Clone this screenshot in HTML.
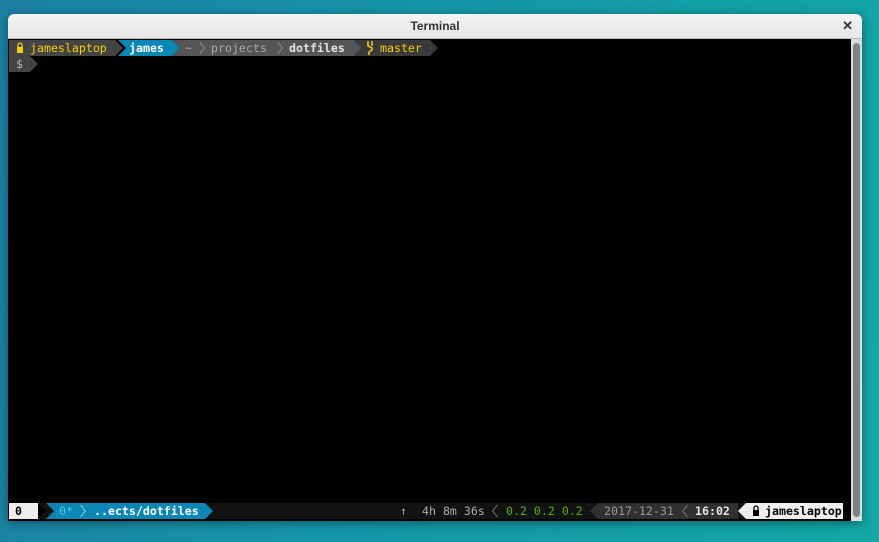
<!DOCTYPE html>
<html><head><style>
*{margin:0;padding:0;box-sizing:border-box}
body{width:879px;height:542px;overflow:hidden;background:linear-gradient(100deg,#1b7fa3 0%,#1594a8 40%,#12a7a5 100%);font-family:"DejaVu Sans Mono","Liberation Mono",monospace;font-size:11.6px;position:relative}
.win{position:absolute;left:8px;top:14px;width:854px;height:507px;background:#000;border-radius:6px 6px 0 0;box-shadow:0 2px 10px rgba(0,0,0,.4);overflow:hidden}
.tb{position:absolute;left:0;top:0;width:854px;height:25px;background:linear-gradient(#f4f4f4,#e6e6e6);border-bottom:1px solid #bbb;font-family:"Liberation Sans",sans-serif;font-size:12px;font-weight:bold;color:#333;text-align:center;line-height:24px}
.x{position:absolute;right:9px;top:0;font-size:13px;color:#333}
.sb{position:absolute;left:843px;top:25px;width:11px;height:482px;background:#dcdcdc}
.th{position:absolute;left:2px;top:4px;width:7px;height:474px;background:#7f8384;border-radius:4px}
.s{position:absolute;height:16px;line-height:16px;white-space:pre}
.ar{position:absolute;height:16px}
.sep{position:absolute;width:6px;height:12px}
</style></head><body>
<div class="win">
<div class="tb">Terminal<span class="x">✕</span></div>
<div class="sb"><div class="th"></div></div>
</div>
<!-- top row y40 -->
<div class="s" style="left:9px;top:40px;width:106px;background:#444"></div>
<div class="ar" style="left:115px;top:40px;width:8px;background:#444;clip-path:polygon(0 0,100% 50%,0 100%)"></div>
<div class="s" style="left:118px;top:40px;width:54px;background:#0a87b4;clip-path:polygon(0 0,100% 0,100% 100%,0 100%,8px 50%)"></div>
<div class="ar" style="left:172px;top:40px;width:8px;background:#0a87b4;clip-path:polygon(0 0,100% 50%,0 100%)"></div>
<div class="s" style="left:172px;top:40px;width:182px;background:#555;clip-path:polygon(0 0,100% 0,100% 100%,0 100%,8px 50%)"></div>
<div class="ar" style="left:354px;top:40px;width:8px;background:#555;clip-path:polygon(0 0,100% 50%,0 100%)"></div>
<div class="s" style="left:354px;top:40px;width:76px;background:#3a3a3a;clip-path:polygon(0 0,100% 0,100% 100%,0 100%,8px 50%)"></div>
<div class="ar" style="left:430px;top:40px;width:8px;background:#3a3a3a;clip-path:polygon(0 0,100% 50%,0 100%)"></div>
<svg style="position:absolute;left:16px;top:42px" width="8" height="11"><path d="M2 5V3a2 2 0 0 1 4 0v2" stroke="#f5d000" stroke-width="1.3" fill="none"/><rect x="1" y="5" width="6" height="6" fill="#f5d000"/></svg>
<div class="s" style="left:30px;top:40px;color:#f5d000">jameslaptop</div>
<div class="s" style="left:129px;top:40px;color:#fff;font-weight:bold">james</div>
<div class="s" style="left:185px;top:40px;color:#aaa">~</div>
<svg class="sep" style="left:199px;top:42px"><path d="M0.5 0L5.5 6L0.5 12" stroke="#888" fill="none"/></svg>
<div class="s" style="left:211px;top:40px;color:#aaa">projects</div>
<svg class="sep" style="left:277px;top:42px"><path d="M0.5 0L5.5 6L0.5 12" stroke="#888" fill="none"/></svg>
<div class="s" style="left:289px;top:40px;color:#e4e4e4;font-weight:bold">dotfiles</div>
<svg style="position:absolute;left:366px;top:41px" width="8" height="14"><path d="M2 0V5L6 7V9L3 11V14M6 0V5" stroke="#f5d000" stroke-width="1.5" fill="none"/></svg>
<div class="s" style="left:380px;top:40px;color:#f5d000">master</div>
<!-- row 2 -->
<div class="s" style="left:9px;top:56px;width:21px;background:#444"></div>
<div class="ar" style="left:30px;top:56px;width:8px;background:#444;clip-path:polygon(0 0,100% 50%,0 100%)"></div>
<div class="s" style="left:16px;top:56px;color:#bbb">$</div>
<!-- bottom bar -->
<div class="s" style="left:9px;top:503px;width:834px;background:#121212"></div>
<div class="s" style="left:9px;top:503px;width:29px;background:#eee"></div>
<div class="ar" style="left:38px;top:503px;width:8px;background:#000;clip-path:polygon(0 0,100% 50%,0 100%)"></div>
<div class="s" style="left:15px;top:503px;color:#000;font-weight:bold">0</div>
<div class="s" style="left:46px;top:503px;width:159px;background:#0a87b4;clip-path:polygon(0 0,100% 0,100% 100%,0 100%,8px 50%)"></div>
<div class="ar" style="left:205px;top:503px;width:8px;background:#0a87b4;clip-path:polygon(0 0,100% 50%,0 100%)"></div>
<div class="s" style="left:59px;top:503px;color:#5cc0e0">0*</div>
<svg class="sep" style="left:80px;top:505px"><path d="M0.5 0L5.5 6L0.5 12" stroke="#8cd" fill="none"/></svg>
<div class="s" style="left:94px;top:503px;color:#fff;font-weight:bold">..ects/dotfiles</div>
<div class="s" style="left:400px;top:503px;color:#aaa">↑</div>
<div class="s" style="left:422px;top:503px;color:#aaa">4h 8m 36s</div>
<svg class="sep" style="left:492px;top:505px"><path d="M5.5 0L0.5 6L5.5 12" stroke="#777" fill="none"/></svg>
<div class="s" style="left:506px;top:503px;color:#5faf00">0.2 0.2 0.2</div>
<div class="s" style="left:590px;top:503px;width:148px;background:#303030;clip-path:polygon(8px 0,100% 0,100% 100%,8px 100%,0 50%)"></div>
<div class="s" style="left:604px;top:503px;color:#999">2017-12-31</div>
<svg class="sep" style="left:682px;top:505px"><path d="M5.5 0L0.5 6L5.5 12" stroke="#777" fill="none"/></svg>
<div class="s" style="left:695px;top:503px;color:#e4e4e4;font-weight:bold">16:02</div>
<div class="s" style="left:738px;top:503px;width:105px;background:#eee;clip-path:polygon(8px 0,100% 0,100% 100%,8px 100%,0 50%)"></div>
<svg style="position:absolute;left:752px;top:505px" width="8" height="11"><path d="M2 5V3a2 2 0 0 1 4 0v2" stroke="#000" stroke-width="1.3" fill="none"/><rect x="1" y="5" width="6" height="6" fill="#000"/></svg>
<div class="s" style="left:765px;top:503px;color:#000;font-weight:bold">jameslaptop</div>
</body></html>
